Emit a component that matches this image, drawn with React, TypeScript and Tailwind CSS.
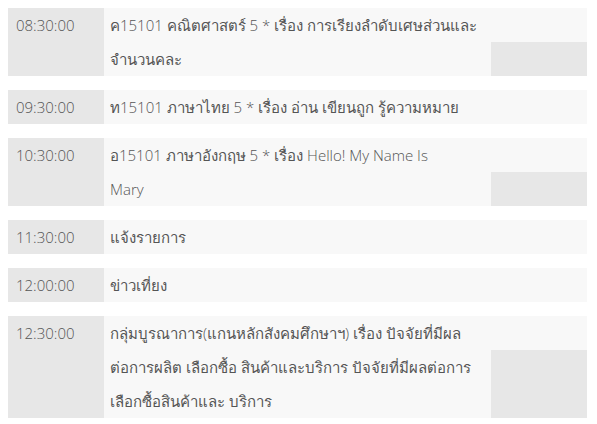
const rows: { time: string; lines: string[] }[] = [
  { time: "08:30:00", lines: ["ค15101 คณิตศาสตร์ 5 * เรื่อง การเรียงลำดับเศษส่วนและ", "จำนวนคละ"] },
  { time: "09:30:00", lines: ["ท15101 ภาษาไทย 5 * เรื่อง อ่าน เขียนถูก รู้ความหมาย"] },
  { time: "10:30:00", lines: ["อ15101 ภาษาอังกฤษ 5 * เรื่อง Hello! My Name Is", "Mary"] },
  { time: "11:30:00", lines: ["แจ้งรายการ"] },
  { time: "12:00:00", lines: ["ข่าวเที่ยง"] },
  {
    time: "12:30:00",
    lines: [
      "กลุ่มบูรณาการ(แกนหลักสังคมศึกษาฯ) เรื่อง ปัจจัยที่มีผล",
      "ต่อการผลิต เลือกซื้อ สินค้าและบริการ ปัจจัยที่มีผลต่อการ",
      "เลือกซื้อสินค้าและ บริการ",
    ],
  },
];

export default function App() {
  return (
    <div className="w-[597px] h-[424px] bg-white pt-2 px-2 font-['Open_Sans','Noto_Sans',sans-serif] font-light text-[15px] leading-[34px] text-[#555]">
      <div className="flex flex-col gap-[14px] w-[579px]">
        {rows.map((r) => (
          <div key={r.time} className="flex">
            <div className="w-[96px] shrink-0 bg-[#e7e7e7] px-2">{r.time}</div>
            <div className="flex flex-1 bg-[#f8f8f8]">
              <div className="flex-1 pl-1.5">
                {r.lines.map((l, i) => (
                  <div key={i} className="whitespace-nowrap">
                    {l}
                  </div>
                ))}
              </div>
              <div className="w-[96px] shrink-0 flex flex-col pt-[34px]">
                {r.lines.length > 1 && <div className="flex-1 bg-[#e7e7e7]" />}
              </div>
            </div>
          </div>
        ))}
      </div>
    </div>
  );
}
